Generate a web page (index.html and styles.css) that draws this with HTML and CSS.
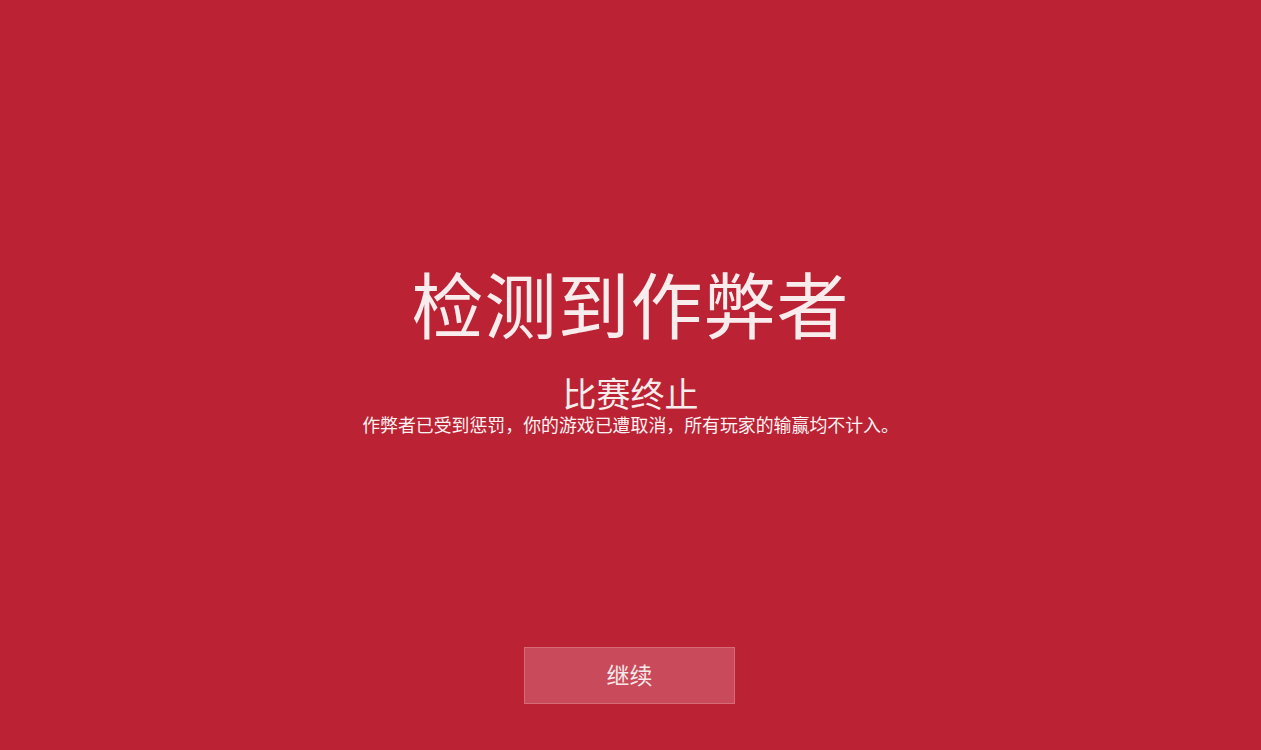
FILE: index.html
```html
<!DOCTYPE html>
<html>

<head>
    <title>比赛终止</title>
    <link rel="stylesheet" href="styles.css">
</head>

<body>
    <div class="notice">
        <h1 class="notice-title">检测到作弊者</h1>
        <h2 class="notice-subtitle">比赛终止</h2>
        <p class="notice-text">作弊者已受到惩罚，你的游戏已遭取消，所有玩家的输赢均不计入。</p>
        <button class="continue-btn">继续</button>
    </div>
</body>

</html>
```

FILE: styles.css
```css
html,
body {
    margin: 0;
    height: 100%;
}

body {
    background-color: #bb2334;
    color: #f8eced;
    font-family: "Noto Sans CJK SC", "Noto Sans", sans-serif;
}

.notice {
    display: flex;
    flex-direction: column;
    align-items: center;
    padding-top: 266px;
}

.notice-title {
    margin: 0;
    font-size: 72px;
    line-height: 72px;
    font-weight: 400;
    letter-spacing: 1px;
}

.notice-subtitle {
    margin: 39px 0 0;
    font-size: 34px;
    line-height: 32px;
    font-weight: 400;
}

.notice-text {
    margin: 7px 0 0;
    font-size: 17.9px;
    line-height: 17px;
    color: #fbf2f3;
}

.continue-btn {
    margin-top: 214px;
    margin-right: 2px;
    width: 211px;
    height: 57px;
    padding: 0 0 4px;
    background-color: #c94a5a;
    border: 1px solid #d66c78;
    color: #f6e9eb;
    font-family: inherit;
    font-size: 23px;
    cursor: pointer;
}
```
